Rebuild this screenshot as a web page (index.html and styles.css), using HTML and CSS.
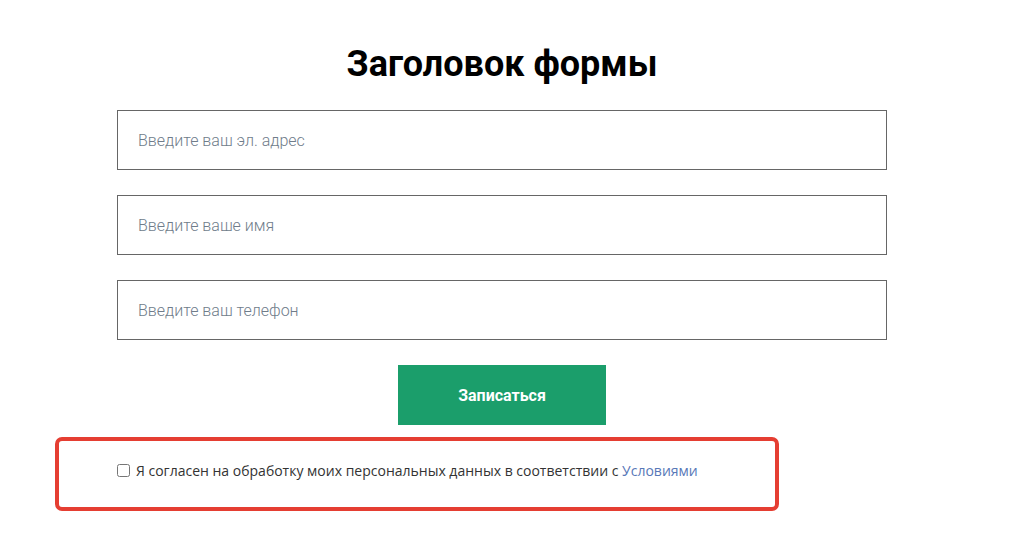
FILE: index.html
```html
<!DOCTYPE html>
<html lang="ru">
<head>
    <meta charset="UTF-8">
    <meta name="viewport" content="width=device-width, initial-scale=1.0">
    <title>Форма записи</title>
    <link rel="stylesheet" href="styles.css">
</head>
<body>

<div class="wrap">
    <h1>Заголовок формы</h1>

    <form class="signup-form">
        <input class="field" type="email" placeholder="Введите ваш эл. адрес">
        <input class="field" type="text" placeholder="Введите ваше имя">
        <input class="field" type="tel" placeholder="Введите ваш телефон">
        <button class="submit-btn" type="button">Записаться</button>

        <!-- согласие на обработку данных (выделено рамкой) -->
        <div class="consent">
            <label class="consent-label">
                <input type="checkbox">
                <span>Я согласен на обработку моих персональных данных в соответствии с <a href="#">Условиями</a></span>
            </label>
        </div>
    </form>
</div>

</body>
</html>
```

FILE: styles.css
```css
html, body {
    min-height: 100%;
}
body {
    margin: 0;
    padding: 0 9px 30px 0;
    background-color: #fff;
    font-family: Roboto, Arial, sans-serif;
}
.wrap {
    width: 770px;
    margin: 0 auto;
    padding-top: 39px;
}
h1 {
    margin: 0 0 21px;
    text-align: center;
    font-size: 36px;
    font-weight: 700;
    line-height: 50px;
    color: #000;
}
.signup-form {
    display: flex;
    flex-direction: column;
    align-items: center;
    gap: 25px;
}
.field {
    box-sizing: border-box;
    width: 100%;
    height: 60px;
    padding: 0 20px;
    border: 1px solid #666;
    border-radius: 0;
    font-family: Roboto, Arial, sans-serif;
    font-size: 16px;
    font-weight: 300;
    color: #333;
    outline: none;
}
.field::placeholder {
    color: #6f7c8a;
}
.submit-btn {
    width: 208px;
    height: 60px;
    border: none;
    background-color: #1b9e6b;
    color: #fff;
    font-family: Roboto, Arial, sans-serif;
    font-size: 16px;
    font-weight: 700;
    cursor: pointer;
}
.consent {
    box-sizing: border-box;
    align-self: flex-start;
    width: 724px;
    height: 74px;
    margin: -13px 0 0 -62px;
    padding: 20px 0 0 58px;
    border: 4px solid #e53e32;
    border-radius: 7px;
}
.consent-label {
    display: flex;
    align-items: center;
    gap: 6px;
    font-family: "Open Sans", Arial, sans-serif;
    font-size: 14px;
    line-height: 19px;
    color: #333;
}
.consent-label input {
    width: 13px;
    height: 13px;
    margin: 0;
}
.consent-label a {
    color: #5878b8;
    text-decoration: none;
}
```
